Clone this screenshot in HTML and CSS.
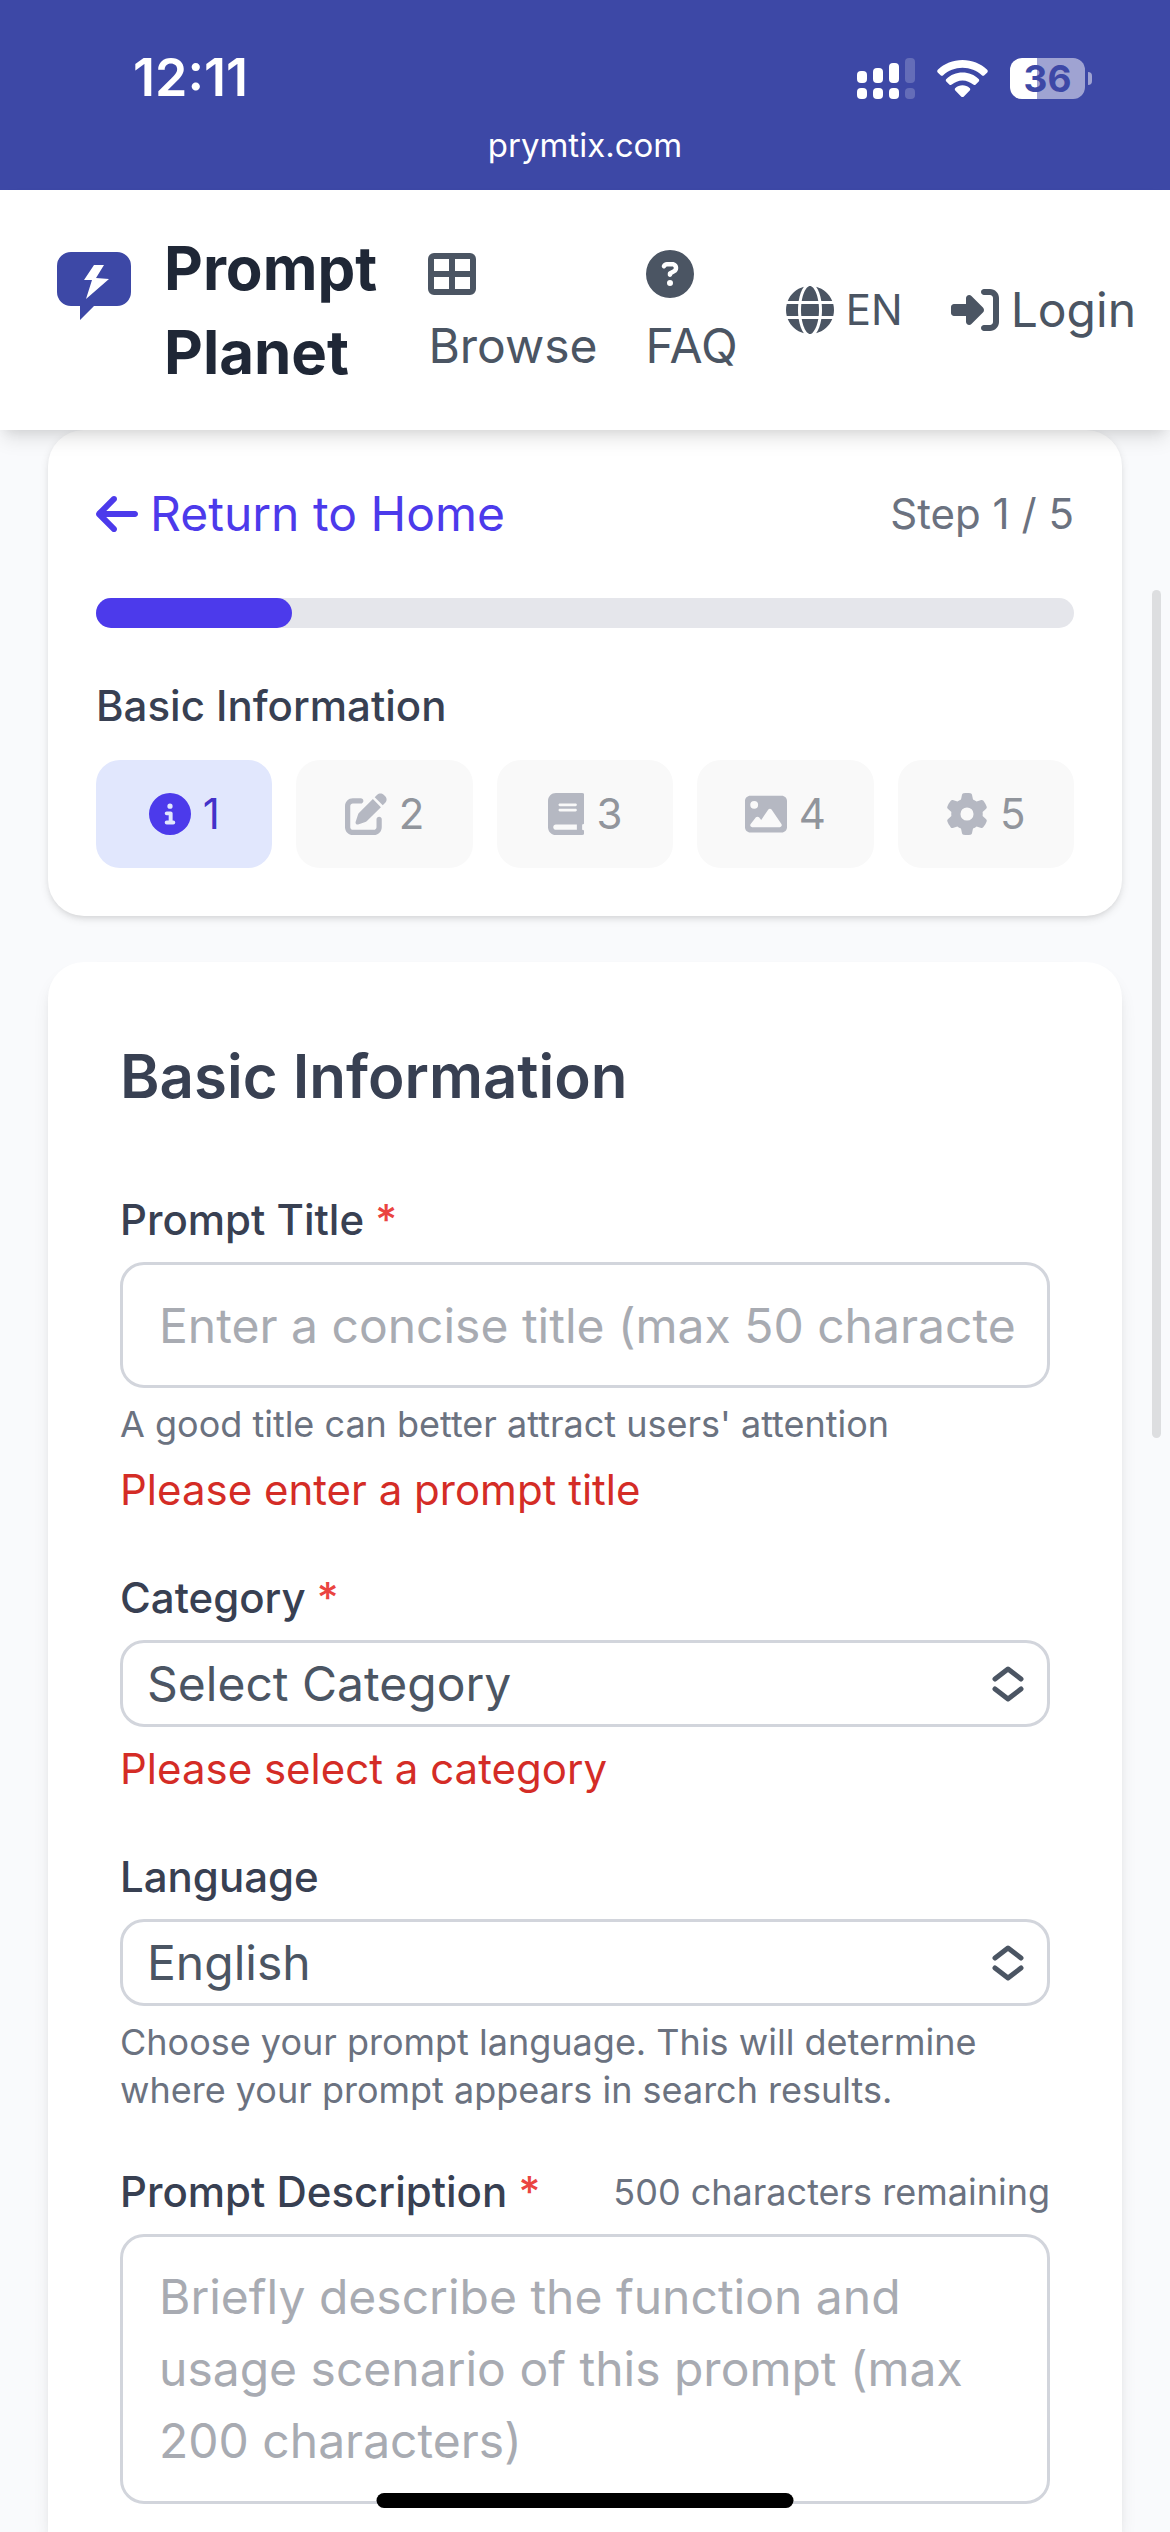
FILE: index.html
```html
<!DOCTYPE html>
<html lang="en">
<head>
<meta charset="utf-8">
<meta name="viewport" content="width=device-width, initial-scale=1">
<title>Prompt Planet</title>
<link rel="stylesheet" href="styles.css">
</head>
<body>
<div class="browser-bar">
  <div class="status">
    <span class="status-time">12:11</span>
    <div class="status-icons">
      <svg class="signal" viewBox="0 0 58 41" aria-hidden="true">
        <g fill="#fff">
          <rect x="0" y="13" width="10" height="12" rx="4"/>
          <rect x="16" y="10" width="10" height="15" rx="4"/>
          <rect x="32" y="5" width="10" height="20" rx="4"/>
          <rect x="0" y="30" width="10" height="11" rx="4"/>
          <rect x="16" y="30" width="10" height="11" rx="4"/>
          <rect x="32" y="30" width="10" height="11" rx="4"/>
        </g>
        <g fill="#fff" opacity=".2">
          <rect x="48" y="0" width="10" height="25" rx="4"/>
          <rect x="48" y="30" width="10" height="11" rx="4"/>
        </g>
      </svg>
      <svg class="wifi" viewBox="0 0 51 37" aria-hidden="true">
        <path fill="#fff" d="M25.500 0C35 0 43.700 3.600 50.200 9.700c.8.800.8 1.900.1 2.700l-2.900 2.900c-.7.700-1.800.7-2.600 0C39.700 10.600 33 7.800 25.500 7.800S11.300 10.600 6.200 15.300c-.8.700-1.900.7-2.600 0L.7 12.400C0 11.600 0 10.500.8 9.700 7.300 3.600 16 0 25.500 0z"/>
        <path fill="#fff" d="M25.500 12.600c6.200 0 11.900 2.400 16.100 6.300.8.700.8 1.900.1 2.700l-3 2.900c-.7.700-1.800.7-2.500.1-2.900-2.600-6.600-4.200-10.700-4.200s-7.800 1.600-10.700 4.200c-.7.600-1.800.6-2.500-.1l-3-2.900c-.7-.8-.7-2 .1-2.700 4.200-3.900 9.900-6.300 16.100-6.300z"/>
        <path fill="#fff" d="M25.500 25.300c2.700 0 5.200 1 7.100 2.600.8.700.8 1.800.1 2.600l-5.800 5.900c-.8.800-2 .8-2.800 0l-5.800-5.900c-.7-.8-.7-1.900.1-2.600 1.900-1.600 4.400-2.600 7.100-2.600z"/>
      </svg>
      <div class="battery"><span class="battery-level">36</span><span class="battery-tip"></span></div>
    </div>
  </div>
  <div class="address">prymtix.com</div>
</div>

<header class="site-header">
  <a class="brand" href="#">
    <svg class="brand-logo" viewBox="0 0 74 68" aria-hidden="true">
      <path fill="#3d48a6" d="M14 0H60a14 14 0 0 1 14 14V40a14 14 0 0 1-14 14H37L23 68V54H14A14 14 0 0 1 0 40V14A14 14 0 0 1 14 0z"/>
      <path fill="#fff" d="M37 13H47L39 26L52 27L29 47L35 28H27z"/>
    </svg>
    <span class="brand-name">Prompt Planet</span>
  </a>
  <nav class="site-nav">
    <a class="nav-stack" href="#">
      <svg class="icon" viewBox="0 0 512 512" aria-hidden="true"><path fill-rule="evenodd" d="M64 32H448a64 64 0 0 1 64 64V416a64 64 0 0 1-64 64H64A64 64 0 0 1 0 416V96A64 64 0 0 1 64 32zM64 96V224H224V96zM288 96V224H448V96zM64 288V416H224V288zM288 288V416H448V288z"/></svg>
      <span>Browse</span>
    </a>
    <a class="nav-stack" href="#">
      <svg class="icon" viewBox="0 0 512 512" aria-hidden="true"><path d="M256 512A256 256 0 1 0 256 0a256 256 0 1 0 0 512zM169.800 165.300c7.900-22.300 29.100-37.300 52.800-37.300l58.300 0c34.900 0 63.100 28.300 63.100 63.100c0 22.600-12.100 43.500-31.700 54.800L280 264.400c-.2 13-10.900 23.600-24 23.600c-13.300 0-24-10.700-24-24l0-13.500c0-8.600 4.600-16.500 12.100-20.800l44.300-25.400c4.700-2.700 7.600-7.700 7.600-13.100c0-8.400-6.800-15.100-15.100-15.100l-58.300 0c-3.400 0-6.400 2.100-7.500 5.300l-.4 1.200c-4.400 12.500-18.200 19-30.600 14.600s-19-18.200-14.600-30.600l.4-1.200zM224 352a32 32 0 1 1 64 0 32 32 0 1 1 -64 0z"/></svg>
      <span>FAQ</span>
    </a>
    <button class="nav-row nav-language" type="button">
      <svg class="icon" viewBox="0 0 512 512" aria-hidden="true"><path d="M352 256c0 22.200-1.200 43.600-3.300 64l-185.300 0c-2.200-20.400-3.300-41.800-3.300-64s1.200-43.600 3.300-64l185.300 0c2.200 20.400 3.300 41.800 3.300 64zm28.800-64l123.100 0c5.300 20.500 8.100 41.900 8.100 64s-2.800 43.500-8.100 64l-123.100 0c2.100-20.600 3.200-42 3.200-64s-1.100-43.400-3.200-64zm112.600-32l-116.700 0c-10-63.900-29.800-117.400-55.300-151.600c78.300 20.700 142 77.500 171.900 151.600zm-149.100 0l-176.600 0c6.100-36.400 15.500-68.600 27-94.700c10.500-23.600 22.200-40.700 33.500-51.500C239.400 3.200 248.700 0 256 0s16.600 3.200 27.800 13.800c11.300 10.800 23 27.900 33.500 51.500c11.600 26 20.900 58.200 27 94.700zm-209 0L18.600 160C48.600 85.900 112.200 29.100 190.600 8.400C165.100 42.600 145.300 96.100 135.300 160zM8.100 192l123.100 0c-2.100 20.600-3.200 42-3.200 64s1.100 43.400 3.200 64L8.100 320C2.800 299.500 0 278.100 0 256s2.800-43.500 8.100-64zM194.700 446.600c-11.600-26-20.900-58.200-27-94.600l176.600 0c-6.100 36.400-15.500 68.600-27 94.600c-10.500 23.600-22.200 40.700-33.500 51.500C272.600 508.800 263.300 512 256 512s-16.600-3.200-27.800-13.800c-11.300-10.800-23-27.900-33.500-51.500zM135.300 352c10 63.900 29.800 117.400 55.300 151.600C112.200 482.900 48.600 426.100 18.600 352l116.700 0zm358.100 0c-30 74.100-93.600 130.900-171.900 151.600c25.500-34.200 45.200-87.700 55.300-151.600l116.700 0z"/></svg>
      <span>EN</span>
    </button>
    <a class="nav-row" href="#">
      <svg class="icon" viewBox="0 0 512 512" aria-hidden="true"><path d="M217.900 105.900L340.700 228.700c7.200 7.200 11.300 17.100 11.300 27.300s-4.100 20.100-11.300 27.300L217.900 406.100c-6.400 6.400-15 9.900-24 9.900c-18.700 0-33.900-15.200-33.900-33.900l0-62.100L32 320c-17.700 0-32-14.300-32-32l0-64c0-17.700 14.300-32 32-32l128 0 0-62.100c0-18.700 15.200-33.900 33.900-33.900c9 0 17.600 3.600 24 9.900zM352 416l64 0c17.700 0 32-14.300 32-32l0-256c0-17.700-14.300-32-32-32l-64 0c-17.700 0-32-14.300-32-32s14.300-32 32-32l64 0c53 0 96 43 96 96l0 256c0 53-43 96-96 96l-64 0c-17.700 0-32-14.300-32-32s14.300-32 32-32z"/></svg>
      <span>Login</span>
    </a>
  </nav>
</header>

<main class="page">
  <section class="card progress-card">
    <div class="progress-top">
      <a class="back-link" href="#">
        <svg class="icon-back" viewBox="0 0 448 512" aria-hidden="true"><path d="M9.400 233.400c-12.500 12.500-12.500 32.800 0 45.300l160 160c12.500 12.500 32.800 12.500 45.300 0s12.500-32.800 0-45.300L109.200 288 416 288c17.700 0 32-14.300 32-32s-14.300-32-32-32l-306.700 0L214.600 118.600c12.500-12.500 12.500-32.800 0-45.300s-32.800-12.500-45.300 0l-160 160z"/></svg>
        <span>Return to Home</span>
      </a>
      <span class="step-count">Step 1 / 5</span>
    </div>
    <div class="track" role="progressbar" aria-label="Progress" aria-valuemin="0" aria-valuemax="5" aria-valuenow="1"><div class="track-fill" style="width: 20%"></div></div>
    <div class="steps-block">
      <p class="steps-title">Basic Information</p>
      <div class="steps">
        <button class="step step-active" type="button">
          <svg class="step-icon" viewBox="0 0 512 512" aria-hidden="true"><path d="M256 512A256 256 0 1 0 256 0a256 256 0 1 0 0 512zM216 336l24 0 0-64-24 0c-13.300 0-24-10.700-24-24s10.700-24 24-24l48 0c13.300 0 24 10.700 24 24l0 88 8 0c13.300 0 24 10.700 24 24s-10.700 24-24 24l-80 0c-13.300 0-24-10.700-24-24s10.700-24 24-24zm40-208a32 32 0 1 1 0 64 32 32 0 1 1 0-64z"/></svg>
          <span>1</span>
        </button>
        <button class="step" type="button">
          <svg class="step-icon" viewBox="0 0 512 512" aria-hidden="true"><path d="M471.600 21.700c-21.900-21.900-57.300-21.900-79.200 0L362.300 51.700l97.900 97.900 30.100-30.100c21.900-21.900 21.900-57.300 0-79.200L471.600 21.700zm-299.200 220c-6.100 6.100-10.800 13.600-13.500 21.900l-29.600 88.800c-2.900 8.600-.6 18.100 5.800 24.600s15.900 8.700 24.600 5.800l88.800-29.600c8.200-2.700 15.700-7.400 21.900-13.500L437.700 172.300 339.700 74.300 172.400 241.700zM96 64C43 64 0 107 0 160L0 416c0 53 43 96 96 96l256 0c53 0 96-43 96-96l0-96c0-17.700-14.300-32-32-32s-32 14.300-32 32l0 96c0 17.700-14.300 32-32 32L96 448c-17.700 0-32-14.300-32-32l0-256c0-17.700 14.300-32 32-32l96 0c17.700 0 32-14.300 32-32s-14.300-32-32-32L96 64z"/></svg>
          <span>2</span>
        </button>
        <button class="step" type="button">
          <svg class="step-icon" viewBox="0 0 448 512" aria-hidden="true"><path d="M96 0C43 0 0 43 0 96L0 416c0 53 43 96 96 96l288 0 32 0c17.700 0 32-14.300 32-32s-14.300-32-32-32l0-64c17.700 0 32-14.300 32-32l0-320c0-17.700-14.300-32-32-32L384 0 96 0zm0 384l256 0 0 64L96 448c-17.700 0-32-14.300-32-32s14.300-32 32-32zm32-240c0-8.800 7.200-16 16-16l192 0c8.800 0 16 7.200 16 16s-7.200 16-16 16l-192 0c-8.800 0-16-7.200-16-16zm16 48l192 0c8.800 0 16 7.200 16 16s-7.200 16-16 16l-192 0c-8.800 0-16-7.200-16-16s7.200-16 16-16z"/></svg>
          <span>3</span>
        </button>
        <button class="step" type="button">
          <svg class="step-icon" viewBox="0 0 512 512" aria-hidden="true"><path d="M0 96C0 60.700 28.700 32 64 32l384 0c35.300 0 64 28.700 64 64l0 320c0 35.300-28.700 64-64 64L64 480c-35.300 0-64-28.700-64-64L0 96zM323.800 202.500c-4.500-6.600-11.900-10.500-19.800-10.500s-15.400 3.900-19.800 10.500l-87 127.600L170.700 297c-4.600-5.700-11.500-9-18.700-9s-14.200 3.300-18.700 9l-64 80c-5.800 7.200-6.900 17.100-2.900 25.400s12.400 13.600 21.600 13.600l96 0 32 0 208 0c8.900 0 17.100-4.900 21.200-12.800s3.600-17.400-1.400-24.700l-120-176zM112 192a48 48 0 1 0 0-96 48 48 0 1 0 0 96z"/></svg>
          <span>4</span>
        </button>
        <button class="step" type="button">
          <svg class="step-icon" viewBox="0 0 512 512" aria-hidden="true"><path d="M495.900 166.600c3.200 8.700 .5 18.400-6.400 24.600l-43.300 39.400c1.100 8.300 1.700 16.800 1.700 25.400s-.6 17.100-1.700 25.400l43.300 39.400c6.900 6.200 9.600 15.900 6.400 24.600c-4.400 11.900-9.700 23.300-15.800 34.300l-4.700 8.100c-6.600 11-14 21.400-22.100 31.200c-5.900 7.200-15.700 9.600-24.500 6.800l-55.700-17.700c-13.400 10.300-28.200 18.900-44 25.400l-12.500 57.100c-2 9.100-9 16.300-18.200 17.800c-13.800 2.300-28 3.500-42.500 3.500s-28.700-1.200-42.500-3.500c-9.200-1.500-16.200-8.700-18.200-17.800l-12.500-57.100c-15.800-6.500-30.600-15.100-44-25.400L83.100 425.900c-8.800 2.800-18.600 .3-24.500-6.800c-8.100-9.800-15.500-20.200-22.100-31.200l-4.700-8.100c-6.100-11-11.400-22.400-15.800-34.300c-3.200-8.700-.5-18.400 6.400-24.600l43.300-39.400C64.600 273.100 64 264.600 64 256s.6-17.100 1.700-25.400L22.400 191.200c-6.900-6.200-9.600-15.900-6.400-24.600c4.400-11.900 9.700-23.300 15.800-34.300l4.700-8.100c6.600-11 14-21.400 22.100-31.200c5.900-7.200 15.700-9.600 24.500-6.800l55.700 17.700c13.400-10.300 28.200-18.900 44-25.400l12.500-57.100c2-9.100 9-16.300 18.200-17.800C227.300 1.200 241.500 0 256 0s28.700 1.200 42.500 3.500c9.200 1.500 16.200 8.700 18.200 17.800l12.500 57.100c15.800 6.500 30.600 15.100 44 25.400l55.700-17.700c8.800-2.800 18.600-.3 24.500 6.800c8.100 9.800 15.500 20.200 22.100 31.200l4.700 8.100c6.100 11 11.400 22.400 15.800 34.300zM256 336a80 80 0 1 0 0-160 80 80 0 1 0 0 160z"/></svg>
          <span>5</span>
        </button>
      </div>
    </div>
  </section>

  <form class="card form-card">
    <h1 class="form-title">Basic Information</h1>
    <div class="fields">
      <div class="field">
        <label class="label" for="title">Prompt Title <span class="required">*</span></label>
        <input class="control" id="title" type="text" placeholder="Enter a concise title (max 50 characters)">
        <p class="hint">A good title can better attract users' attention</p>
        <p class="error">Please enter a prompt title</p>
      </div>
      <div class="field">
        <label class="label" for="category">Category <span class="required">*</span></label>
        <div class="select-wrap">
          <select class="select" id="category"><option>Select Category</option></select>
          <svg class="select-arrows" viewBox="0 0 32 36" aria-hidden="true"><path d="M3 13L16 3L29 13M3 23L16 33L29 23"/></svg>
        </div>
        <p class="error">Please select a category</p>
      </div>
      <div class="field">
        <label class="label" for="language">Language</label>
        <div class="select-wrap">
          <select class="select" id="language"><option>English</option></select>
          <svg class="select-arrows" viewBox="0 0 32 36" aria-hidden="true"><path d="M3 13L16 3L29 13M3 23L16 33L29 23"/></svg>
        </div>
        <p class="hint">Choose your prompt language. This will determine where your prompt appears in search results.</p>
      </div>
      <div class="field">
        <div class="label-row">
          <label class="label" for="description">Prompt Description <span class="required">*</span></label>
          <span class="hint">500 characters remaining</span>
        </div>
        <textarea class="control" id="description" rows="3" placeholder="Briefly describe the function and usage scenario of this prompt (max 200 characters)"></textarea>
      </div>
    </div>
  </form>
</main>
<div class="scroll-thumb"></div>
<div class="home-indicator"></div>
</body>
</html>
```
FILE: styles.css
```css
* {
  box-sizing: border-box;
}

body {
  margin: 0;
  min-height: 100vh;
  display: flex;
  flex-direction: column;
  background: #f9fafc;
  color: #384052;
  font-family: Inter, "Liberation Sans", sans-serif;
  font-size: 48px;
  line-height: 72px;
}

p,
h1 {
  margin: 0;
}

a {
  color: inherit;
  text-decoration: none;
}

button,
input,
select,
textarea {
  margin: 0;
  font: inherit;
  color: inherit;
}

/* Browser status area */
.browser-bar {
  height: 190px;
  background: #3d48a6;
  color: #fff;
}

.status {
  display: flex;
  align-items: center;
  justify-content: space-between;
  padding: 42px 78px 0 133px;
}

.status-time {
  font-size: 52px;
  font-weight: 600;
}

.status-icons {
  display: flex;
  align-items: center;
  gap: 22px;
}

.signal {
  width: 58px;
  height: 41px;
}

.wifi {
  width: 51px;
  height: 37px;
}

.battery {
  display: flex;
  align-items: center;
  gap: 3px;
}

.battery-level {
  width: 75px;
  height: 41px;
  border-radius: 12px;
  background: linear-gradient(90deg, #fff 36%, #9fa3d2 36%);
  color: #3d48a6;
  font-size: 37px;
  font-weight: 700;
  line-height: 42px;
  text-align: center;
}

.battery-tip {
  width: 4px;
  height: 13px;
  border-radius: 0 4px 4px 0;
  background: #9fa3d2;
}

.address {
  font-size: 33px;
  line-height: 62px;
  text-align: center;
}

/* Site header */
.site-header {
  position: relative;
  z-index: 1;
  display: flex;
  align-items: center;
  justify-content: space-between;
  padding: 36px 34px 36px 57px;
  background: #fff;
  color: #4b5563;
  box-shadow: 0 12px 18px -3px rgb(0 0 0 / .1), 0 6px 12px -6px rgb(0 0 0 / .1);
}

.brand {
  display: flex;
  align-items: flex-start;
  gap: 33px;
  color: #1f2736;
}

.brand-logo {
  width: 74px;
  height: 68px;
  margin-top: 26px;
}

.brand-name {
  width: min-content;
  font-size: 60px;
  font-weight: 700;
  line-height: 84px;
}

.site-nav {
  display: flex;
  align-items: center;
  gap: 48px;
}

.icon {
  flex: none;
  width: 48px;
  height: 48px;
  fill: currentColor;
}

.nav-stack {
  display: flex;
  flex-direction: column;
  gap: 12px;
  padding-top: 12px;
}

.nav-row {
  display: flex;
  align-items: center;
  gap: 12px;
}

.nav-language {
  padding: 0;
  border: 0;
  background: none;
  font-size: 42px;
}

/* Page body */
.page {
  flex: 1;
  display: flex;
  flex-direction: column;
  gap: 46px;
  padding: 0 48px;
}

.card {
  border-radius: 36px;
  background: #fff;
}

.progress-card {
  display: flex;
  flex-direction: column;
  gap: 48px;
  padding: 48px;
  box-shadow: 0 3px 9px rgb(0 0 0 / .1), 0 3px 6px -3px rgb(0 0 0 / .1);
}

.progress-top {
  display: flex;
  align-items: center;
  justify-content: space-between;
}

.back-link {
  display: flex;
  align-items: center;
  gap: 12px;
  color: #4c3aeb;
}

.icon-back {
  width: 42px;
  height: 48px;
  fill: currentColor;
}

.step-count {
  color: #6b7280;
  font-size: 42px;
  line-height: 60px;
}

.track {
  height: 30px;
  border-radius: 15px;
  background: #e5e6eb;
}

.track-fill {
  height: 100%;
  border-radius: 15px;
  background: #4c3aeb;
}

.steps-block {
  display: flex;
  flex-direction: column;
  gap: 24px;
}

.steps-title {
  font-size: 42px;
  font-weight: 500;
  line-height: 60px;
}

.steps {
  display: grid;
  grid-template-columns: repeat(5, 1fr);
  gap: 24px;
}

.step {
  display: flex;
  align-items: center;
  justify-content: center;
  gap: 12px;
  padding: 24px;
  border: 0;
  border-radius: 24px;
  background: #f9f9f9;
  color: #91959c;
  font-size: 42px;
  line-height: 60px;
}

.step-icon {
  height: 42px;
  fill: #b5b8c2;
}

.step-active {
  background: #e1e7fd;
  color: #4332c9;
}

.step-active .step-icon {
  fill: #4c3aeb;
}

/* Form */
.form-card {
  flex: 1;
  display: flex;
  flex-direction: column;
  gap: 72px;
  padding: 72px 72px 28px;
  border-radius: 36px 36px 0 0;
  box-shadow: 0 12px 18px -3px rgb(0 0 0 / .1), 0 6px 12px -6px rgb(0 0 0 / .1);
}

.form-title {
  font-size: 60px;
  font-weight: 600;
  line-height: 84px;
}

.fields {
  display: flex;
  flex-direction: column;
  gap: 48px;
}

.field {
  display: flex;
  flex-direction: column;
  gap: 12px;
}

.label {
  font-size: 42px;
  font-weight: 500;
  line-height: 60px;
}

.label-row {
  display: flex;
  align-items: center;
  justify-content: space-between;
}

.required {
  color: #ea4441;
}

.control {
  display: block;
  width: 100%;
  padding: 24px 33px 24px 36px;
  border: 3px solid #d2d5dc;
  border-radius: 24px;
  background: #fff;
  resize: none;
  overflow: hidden;
}

input.control {
  height: 126px;
}

.control::placeholder {
  color: #a8abb2;
  opacity: 1;
}

.select-wrap {
  display: grid;
  align-items: center;
}

.select {
  grid-area: 1 / 1;
  height: 87px;
  padding: 0 72px 0 24px;
  border: 3px solid #d2d5dc;
  border-radius: 24px;
  background: #fff;
  color: #4b5563;
  appearance: none;
}

.select-arrows {
  grid-area: 1 / 1;
  justify-self: end;
  width: 32px;
  height: 36px;
  margin-right: 26px;
  fill: none;
  stroke: #4b5563;
  stroke-width: 5;
  stroke-linecap: round;
  stroke-linejoin: round;
  pointer-events: none;
}

.hint {
  color: #6b7280;
  font-size: 36px;
  line-height: 48px;
}

.error {
  color: #d42c26;
  font-size: 42px;
  line-height: 60px;
}

/* Overlays drawn above the page */
.scroll-thumb {
  position: fixed;
  top: 590px;
  right: 9px;
  width: 9px;
  height: 848px;
  border-radius: 5px;
  background: #dddee0;
}

.home-indicator {
  position: fixed;
  bottom: 24px;
  left: 50%;
  z-index: 2;
  width: 417px;
  height: 15px;
  border-radius: 8px;
  background: #000;
  transform: translateX(-50%);
}
```
